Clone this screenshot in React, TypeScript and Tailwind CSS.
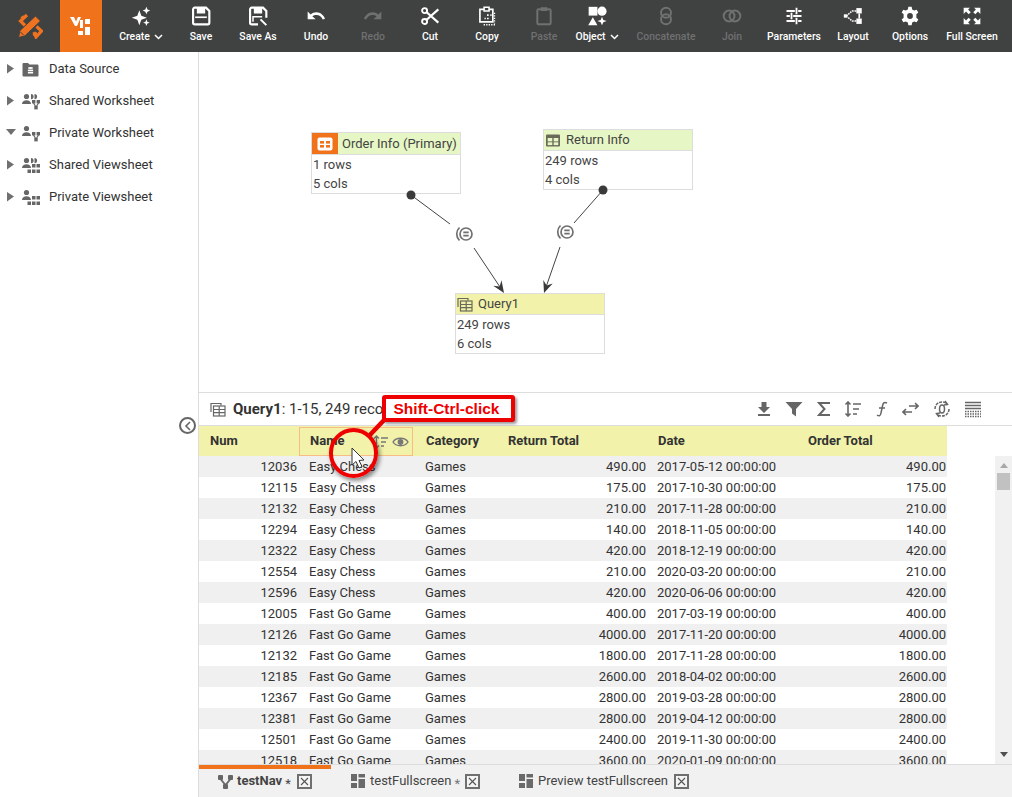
import React from "react";

const W = "#ffffff";

function Ico({ size = 24, children, className = "" }: { size?: number; children: React.ReactNode; className?: string }) {
  return (
    <svg width={size} height={size} viewBox="0 0 24 24" className={className} fill="none">
      {children}
    </svg>
  );
}

const icons: Record<string, React.ReactNode> = {
  create: (
    <g fill="currentColor">
      <path d="M10 5 L12.4 11.6 L19 14 L12.4 16.4 L10 23 L7.6 16.4 L1 14 L7.6 11.6 Z" />
      <path d="M18.5 1 L19.8 4.2 L23 5.5 L19.8 6.8 L18.5 10 L17.2 6.8 L14 5.5 L17.2 4.2 Z" />
      <path d="M18.5 16 L19.6 18.9 L22.5 20 L19.6 21.1 L18.5 24 L17.4 21.1 L14.5 20 L17.4 18.9 Z" />
    </g>
  ),
  save: (
    <g>
      <path d="M4.5 2 H18 L22 6 V20 a2 2 0 0 1-2 2 H4.5 a2 2 0 0 1-2-2 V4 a2 2 0 0 1 2-2 Z" stroke="currentColor" strokeWidth="2.6" />
      <rect x="7" y="2" width="10" height="7" fill="currentColor" />
      <rect x="5" y="12.5" width="14" height="2" fill="currentColor" />
    </g>
  ),
  saveas: (
    <g>
      <path d="M12 22 H4.5 a2 2 0 0 1-2-2 V4 a2 2 0 0 1 2-2 H18 L22 6 V14" stroke="currentColor" strokeWidth="2.6" />
      <rect x="7" y="2" width="10" height="7" fill="currentColor" />
      <path d="M6 19 V13 H17" stroke="currentColor" strokeWidth="1.8" />
      <path d="M15 16 L22 23" stroke="currentColor" strokeWidth="2.4" />
    </g>
  ),
  undo: <path fill="currentColor" d="M12.5 7.500 C9.900 7.500 7.500 8.500 5.600 10.100 L2 6.500 V16 H11.500 L7.600 12.400 C9 11.300 10.700 10.800 12.500 10.800 C16 10.800 19 12.900 20.100 16.300 L22.800 15.400 C21.400 11 17.200 7.500 12.500 7.500 Z" />,
  redo: <path fill="currentColor" d="M11.5 7.500 C14.100 7.500 16.500 8.500 18.400 10.100 L22 6.500 V16 H12.500 L16.400 12.400 C15 11.300 13.300 10.800 11.500 10.800 C8 10.800 5 12.900 3.900 16.300 L1.200 15.400 C2.600 11 6.800 7.500 11.500 7.500 Z" />,
  cut: (
    <g stroke="currentColor" strokeWidth="2.3">
      <circle cx="5.5" cy="5.5" r="3" />
      <circle cx="5.5" cy="18.5" r="3" />
      <path d="M8 7.5 L22 20 M8 16.5 L22 4" strokeWidth="2.6" />
    </g>
  ),
  copy: (
    <g>
      <path d="M9 4 H3.5 V19 H19 V4 H14" stroke="currentColor" strokeWidth="2" />
      <rect x="8.5" y="1.5" width="6" height="4.5" stroke="currentColor" strokeWidth="1.8" />
      <path d="M12 10 h2 v2 h-2 z M16 10 h1.5 v2 H16 z M12 14 h2 v2 h-2 z M9 14 h1.5 v2 H9 z" fill="currentColor" />
      <path d="M21 8 v13 M8 22.5 h14" stroke="currentColor" strokeWidth="1.6" strokeDasharray="1.6 1.4" />
    </g>
  ),
  paste: (
    <g>
      <rect x="4" y="4" width="16" height="18" rx="1.5" stroke="currentColor" strokeWidth="2.4" />
      <rect x="8" y="1.5" width="8" height="4.5" fill="currentColor" />
    </g>
  ),
  object: (
    <g fill="currentColor">
      <rect x="2" y="1" width="10.5" height="10.5" />
      <circle cx="18" cy="6.2" r="5.5" />
      <path d="M7 13.5 L12.5 23 H1.5 Z" />
      <path d="M18 13 L19.6 16.7 L23.5 18 L19.6 19.4 L18 23 L16.4 19.4 L12.5 18 L16.4 16.7 Z" />
    </g>
  ),
  concat: (
    <g stroke="currentColor" strokeWidth="2.4">
      <circle cx="12" cy="8" r="6" />
      <circle cx="12" cy="16" r="6" />
    </g>
  ),
  join: (
    <g stroke="currentColor" strokeWidth="2.4">
      <circle cx="8.5" cy="12" r="6.5" />
      <circle cx="15.5" cy="12" r="6.5" />
    </g>
  ),
  params: (
    <g stroke="currentColor" strokeWidth="2.2">
      <path d="M3 6 H13 M17 6 H21 M15 2 V10 M3 12 H7 M11 12 H21 M9 8 V16 M3 18 H13 M17 18 H21 M15 14 V22" />
    </g>
  ),
  layout: (
    <g>
      <path d="M4 12 L11 6 H19 M4 12 L11 18 H19" stroke="currentColor" strokeWidth="1.8" strokeDasharray="2 1" />
      <rect x="1" y="10" width="4" height="4" fill="currentColor" />
      <rect x="16" y="2.500" width="6.500" height="6.500" fill="currentColor" />
      <rect x="16" y="15" width="6.500" height="6.500" fill="currentColor" />
      <path d="M19.500 9 V15" stroke="currentColor" strokeWidth="2" />
    </g>
  ),
  options: (
    <path fill="currentColor" fillRule="evenodd" d="M10 1 H14 L14.6 4.2 C15.5 4.5 16.3 5 17 5.5 L20 4.4 L22 7.8 L19.6 9.9 C19.7 10.9 19.7 13.1 19.6 14.1 L22 16.2 L20 19.6 L17 18.5 C16.3 19 15.5 19.5 14.6 19.8 L14 23 H10 L9.4 19.8 C8.5 19.5 7.7 19 7 18.5 L4 19.6 L2 16.2 L4.4 14.1 C4.3 13.1 4.3 10.9 4.4 9.9 L2 7.8 L4 4.4 L7 5.5 C7.7 5 8.5 4.5 9.4 4.2 Z M12 8.5 A3.5 3.5 0 1 0 12 15.5 A3.5 3.5 0 1 0 12 8.5 Z" />
  ),
  full: (
    <g fill="currentColor">
      <path d="M2 2 H9.500 L7.300 4.200 L10.500 7.400 L8 9.900 L4.800 6.700 L2 9.500 Z" />
      <path d="M22 2 H14.500 L16.700 4.200 L13.500 7.400 L16 9.900 L19.200 6.700 L22 9.500 Z" />
      <path d="M2 22 H9.500 L7.300 19.800 L10.500 16.600 L8 14.100 L4.800 17.300 L2 14.500 Z" />
      <path d="M22 22 H14.500 L16.700 19.800 L13.500 16.600 L16 14.100 L19.200 17.300 L22 14.500 Z" />
    </g>
  ),
};

const tools: { k: string; label: string; w: string; off?: boolean; caret?: boolean }[] = [
  { k: "create", label: "Create", w: "w-[78px]", caret: true },
  { k: "save", label: "Save", w: "w-[42px]" },
  { k: "saveas", label: "Save As", w: "w-[72px]" },
  { k: "undo", label: "Undo", w: "w-[44px]" },
  { k: "redo", label: "Redo", w: "w-[70px]", off: true },
  { k: "cut", label: "Cut", w: "w-[44px]" },
  { k: "copy", label: "Copy", w: "w-[70px]" },
  { k: "paste", label: "Paste", w: "w-[44px]", off: true },
  { k: "object", label: "Object", w: "w-[62px]", caret: true },
  { k: "concat", label: "Concatenate", w: "w-[76px]", off: true },
  { k: "join", label: "Join", w: "w-[56px]", off: true },
  { k: "params", label: "Parameters", w: "w-[68px]" },
  { k: "layout", label: "Layout", w: "w-[50px]" },
  { k: "options", label: "Options", w: "w-[64px]" },
  { k: "full", label: "Full Screen", w: "w-[60px]" },
];

function Header() {
  return (
    <div className="flex h-[52px] shrink-0 bg-[#404242]">
      <div className="flex h-full w-[60px] items-center justify-center">
        <svg width="26" height="26" viewBox="0 0 26 26" fill="none">
          <path d="M10 2 L3.500 8 L9 13.500 M17 19 L19 24 L24.500 18 L19.500 13.500" stroke="#ee7220" strokeWidth="3.200" />
          <path d="M4 5 L7 3 M16 22 L20 20" stroke="#ee7220" strokeWidth="2" />
          <path d="M1.500 24.500 L3 17.500 L18.500 3 L23.500 8 L8 22.800 Z" fill="#ee7220" stroke="#404242" strokeWidth="1" />
          <path d="M3.500 19 L6.500 22" stroke="#404242" strokeWidth="1" />
        </svg>
      </div>
      <div className="flex h-full w-[42px] items-center justify-center bg-[#f0731c]">
        <svg width="22" height="20" viewBox="0 0 22 20" fill="#fff">
          <path d="M0 1 H4 L6 5.500 L8 1 H11 L7 10 H5 Z" />
          <rect x="10" y="4" width="3" height="8" />
          <rect x="15" y="3" width="5" height="5" />
          <rect x="15" y="11" width="5" height="8" />
          <rect x="8" y="15" width="5" height="4" />
        </svg>
      </div>
      {tools.map((t) => (
        <div key={t.k} className={`flex h-full shrink-0 flex-col items-center ${t.w} ${t.off ? "text-[#6f7070]" : "text-white"}`}>
          <div className="mt-[5px] flex h-[22px] items-center justify-center">
            <Ico size={20}>{icons[t.k]}</Ico>
          </div>
          <div className="mt-[3px] flex h-[14px] items-center whitespace-nowrap text-[10.4px] font-medium leading-[14px]">
            {t.label}
            {t.caret && (
              <svg width="9" height="6" viewBox="0 0 9 6" className="ml-[4px]">
                <path d="M1 1 L4.5 4.5 L8 1" stroke={W} strokeWidth="1.5" fill="none" />
              </svg>
            )}
          </div>
        </div>
      ))}
    </div>
  );
}

const G = "#666666";
function People({ shared }: { shared: boolean }) {
  return (
    <g fill={G}>
      <circle cx="4.5" cy="3.5" r="2.6" />
      <path d="M0 11 a4.500 3.800 0 0 1 9 0 Z" />
      {shared && <path d="M9 1 a2.6 2.6 0 0 1 0 5.200 Z M12.5 1 a2.6 2.6 0 0 1 0 5.200 Z" />}
    </g>
  );
}
function TreeIcon({ kind }: { kind: string }) {
  if (kind === "ds")
    return (
      <svg width="17" height="15" viewBox="0 0 17 15">
        <path d="M0.500 2 a1 1 0 0 1 1-1 H6 L7.500 2.500 H15.500 a1 1 0 0 1 1 1 V13.500 a1 1 0 0 1-1 1 H1.500 a1 1 0 0 1-1-1 Z" fill={G} />
        <ellipse cx="8.5" cy="6" rx="2.6" ry="1.1" fill="#fff" />
        <rect x="5.9" y="7.6" width="5.2" height="1.6" fill="#fff" />
        <rect x="5.9" y="9.9" width="5.2" height="1.6" fill="#fff" />
      </svg>
    );
  const ws = kind === "sw" || kind === "pw";
  const shared = kind === "sw" || kind === "sv";
  return (
    <svg width="18" height="17" viewBox="0 0 18 17">
      <People shared={shared} />
      {ws ? (
        <g fill={G}>
          <rect x="10" y="7" width="3.400" height="3.400" />
          <rect x="14.600" y="7" width="3.400" height="3.400" />
          <rect x="12.300" y="13" width="3.400" height="3.400" />
          <path d="M11.5 10 L14 14 L16.5 10" stroke={G} strokeWidth="1.200" fill="none" />
        </g>
      ) : (
        <g fill={G}>
          <rect x="10" y="7" width="3.500" height="3.500" />
          <rect x="14.500" y="7" width="3.500" height="3.500" />
          <rect x="5.500" y="12.500" width="3.500" height="3.500" />
          <rect x="10" y="12.500" width="3.500" height="3.500" />
          <rect x="14.500" y="12.500" width="3.500" height="3.500" />
        </g>
      )}
    </svg>
  );
}

const tree = [
  { k: "ds", label: "Data Source" },
  { k: "sw", label: "Shared Worksheet" },
  { k: "pw", label: "Private Worksheet", open: true },
  { k: "sv", label: "Shared Viewsheet" },
  { k: "pv", label: "Private Viewsheet" },
];

function Sidebar() {
  return (
    <div className="relative w-[199px] shrink-0 border-r border-[#dddddd] pt-[1px]">
      {tree.map((t) => (
        <div key={t.k} className="flex h-[32px] items-center text-[13px] text-[#333333]">
          <div className="flex w-[22px] justify-center">
            <svg width="14" height="12" viewBox="0 0 14 12">
              {t.open ? <path d="M2 2 H12 L7 8 Z" fill="#707070" /> : <path d="M3 1 L10 5.500 L3 10.500 Z" fill="#707070" />}
            </svg>
          </div>
          <div className="flex w-[27px] justify-start">
            <TreeIcon kind={t.k} />
          </div>
          <span>{t.label}</span>
        </div>
      ))}
      <div className="absolute left-[179px] top-[365px] flex h-[17px] w-[17px] items-center justify-center rounded-full border-2 border-[#666666] bg-white">
        <svg width="8" height="10" viewBox="0 0 8 10">
          <path d="M6 1 L2 5 L6 9" stroke="#666666" strokeWidth="1.6" fill="none" />
        </svg>
      </div>
    </div>
  );
}

function TableIcon({ color = "#6a6a5a", multi = false }: { color?: string; multi?: boolean }) {
  return (
    <svg width="16" height="15" viewBox="0 0 16 15" fill="none">
      {multi && <path d="M1 10 V1.5 H11 V3.5" stroke={color} strokeWidth="1.2" />}
      {multi ? (
        <g stroke={color} strokeWidth="1.2">
          <rect x="3.5" y="4" width="11.5" height="10" />
          <path d="M3.5 7.5 H15 M9.2 4 V14 M3.5 10.7 H15" />
        </g>
      ) : (
        <g>
          <rect x="1" y="1.5" width="14" height="12" rx="1" fill={color} />
          <rect x="2.7" y="5" width="4.6" height="3.4" fill="#e6f7c5" />
          <rect x="8.7" y="5" width="4.6" height="3.4" fill="#e6f7c5" />
          <rect x="2.7" y="9.3" width="4.6" height="2.8" fill="#e6f7c5" />
          <rect x="8.7" y="9.3" width="4.6" height="2.8" fill="#e6f7c5" />
        </g>
      )}
    </svg>
  );
}

function Node({ pos, title, rows, cols, bg, primary, multi }: { pos: string; title: string; rows: string; cols: string; bg: string; primary?: boolean; multi?: boolean }) {
  return (
    <div className={`absolute w-[150px] border border-[#dddddd] bg-white text-[13px] text-[#444444] ${pos}`}>
      <div className={`flex items-center ${bg} ${primary ? "h-[21px]" : "h-[20px]"}`}>
        {primary ? (
          <div className="flex h-full w-[26px] items-center justify-center bg-[#f0731c]">
            <svg width="16" height="14" viewBox="0 0 16 14">
              <rect x="0.5" y="0.5" width="15" height="13" rx="2" fill="#fff" />
              <rect x="3" y="4" width="4" height="2.6" fill="#f0731c" />
              <rect x="9" y="4" width="4" height="2.6" fill="#f0731c" />
              <rect x="3" y="8" width="4" height="2.6" fill="#f0731c" />
              <rect x="9" y="8" width="4" height="2.6" fill="#f0731c" />
            </svg>
          </div>
        ) : (
          <div className="ml-[1px] flex w-[17px] items-center">
            <TableIcon multi={multi} />
          </div>
        )}
        <span className="ml-[4px] whitespace-nowrap">{title}</span>
      </div>
      <div className="h-[20px] border-t border-[#dddddd] pl-[1px] leading-[20px]">{rows}</div>
      <div className="h-[19px] pl-[1px] leading-[19px]">{cols}</div>
    </div>
  );
}

function JoinMark({ x, y }: { x: number; y: number }) {
  return (
    <g transform={`translate(${x} ${y})`} stroke="#707070" fill="none" strokeWidth="1.7">
      <circle cx="2" cy="0" r="6" />
      <path d="M-4.500 -6.500 A9 9 0 0 0 -4.500 6.500" />
      <path d="M-0.700 -1.700 H4.700 M-0.700 1.700 H4.700" />
    </g>
  );
}

function Canvas() {
  return (
    <div className="relative h-[341px] shrink-0 border-b border-[#dddddd]">
      <Node pos="left-[112px] top-[80px]" title="Order Info (Primary)" rows="1 rows" cols="5 cols" bg="bg-[#e6f7c5]" primary />
      <Node pos="left-[344px] top-[77px]" title="Return Info" rows="249 rows" cols="4 cols" bg="bg-[#e6f7c5]" />
      <Node pos="left-[256px] top-[241px]" title="Query1" rows="249 rows" cols="6 cols" bg="bg-[#f2f2aa]" multi />
      <svg width="813" height="340" className="absolute left-0 top-0">
        <g stroke="#444444" strokeWidth="1" fill="none">
          <path d="M212 143 L251 172" />
          <path d="M404 138 L375 171" />
          <path d="M275 196 L303 238" />
          <path d="M361 195 L346 238" />
        </g>
        <circle cx="212" cy="143" r="4.5" fill="#3a3a3a" />
        <circle cx="404" cy="138" r="4.5" fill="#3a3a3a" />
        <path d="M305 241 L302.500 228.300 L300.600 234.400 L294.200 233.800 Z" fill="#3a3a3a" />
        <path d="M345 241 L353.700 231.400 L347.600 233.500 L344.300 228 Z" fill="#3a3a3a" />
        <JoinMark x={265} y={182} />
        <JoinMark x={366} y={180} />
      </svg>
    </div>
  );
}

function QueryBar() {
  const c = "#666666";
  return (
    <div className="flex h-[33px] shrink-0 items-center border-b border-[#dddddd] pl-[11px] text-[15px] text-[#333333]">
      <TableIcon multi color="#666666" />
      <span className="ml-[7px] font-bold">Query1</span>
      <span>: 1-15, 249 records</span>
      <div className="ml-auto mr-[30px] flex items-center gap-[13.3px]">
        <svg width="16" height="16" viewBox="0 0 16 16" fill={c}><path d="M5.500 1 H10.500 V6 H14 L8 12 L2 6 H5.500 Z" /><rect x="2" y="13" width="12" height="2" /></svg>
        <svg width="18" height="16" viewBox="0 0 18 16" fill={c}><path d="M0.5 1 H17.500 L11 8 V15.500 L7 12.500 V8 Z" /></svg>
        <svg width="14" height="16" viewBox="0 0 14 16" fill="none" stroke={c} strokeWidth="2"><path d="M13 2 H2 L7.500 8 L2 14 H13" /></svg>
        <svg width="18" height="16" viewBox="0 0 18 16" fill="none" stroke={c} strokeWidth="1.6"><path d="M4 1 V15 M1.500 3.500 L4 1 L6.500 3.500 M1.500 12.500 L4 15 L6.500 12.500 M9 3 H17 M9 8 H15 M9 13 H13" /></svg>
        <svg width="14" height="16" viewBox="0 0 14 16" fill="none" stroke={c} strokeWidth="1.5"><path d="M12 2 C9 0.500 8 2 7.500 5 L6 12 C5.500 15 4 15.500 2 14 M4 7 H10" /></svg>
        <svg width="17" height="16" viewBox="0 0 17 16" fill="none" stroke={c} strokeWidth="1.6"><path d="M7 5 H16 M13 2 L16 5 L13 8 M10 11 H1 M4 8 L1 11 L4 14" /></svg>
        <svg width="18" height="18" viewBox="0 0 18 18" fill="none" stroke={c} strokeWidth="1.5"><path d="M2 9 A7 7 0 0 1 14 4 M16 9 A7 7 0 0 1 4 14" strokeDasharray="3 1" /><ellipse cx="9" cy="9" rx="2.500" ry="4" /><path d="M12 1 L14.500 4.500 L11 5 M6 17 L3.500 13.500 L7 13" /></svg>
        <svg width="18" height="17" viewBox="0 0 18 17" fill="none" stroke={c}><path d="M1 1.500 H17 M1 4.500 H17 M1 7.500 H17" strokeWidth="1.3" /><path d="M1 10.500 H17 M1 13 H17 M1 15.500 H17" strokeDasharray="1.500 1" strokeWidth="1.3" /></svg>
      </div>
    </div>
  );
}

const data: [string, string, string, string, string, string][] = [
  ["12036", "Easy Chess", "Games", "490.00", "2017-05-12 00:00:00", "490.00"],
  ["12115", "Easy Chess", "Games", "175.00", "2017-10-30 00:00:00", "175.00"],
  ["12132", "Easy Chess", "Games", "210.00", "2017-11-28 00:00:00", "210.00"],
  ["12294", "Easy Chess", "Games", "140.00", "2018-11-05 00:00:00", "140.00"],
  ["12322", "Easy Chess", "Games", "420.00", "2018-12-19 00:00:00", "420.00"],
  ["12554", "Easy Chess", "Games", "210.00", "2020-03-20 00:00:00", "210.00"],
  ["12596", "Easy Chess", "Games", "420.00", "2020-06-06 00:00:00", "420.00"],
  ["12005", "Fast Go Game", "Games", "400.00", "2017-03-19 00:00:00", "400.00"],
  ["12126", "Fast Go Game", "Games", "4000.00", "2017-11-20 00:00:00", "4000.00"],
  ["12132", "Fast Go Game", "Games", "1800.00", "2017-11-28 00:00:00", "1800.00"],
  ["12185", "Fast Go Game", "Games", "2600.00", "2018-04-02 00:00:00", "2600.00"],
  ["12367", "Fast Go Game", "Games", "2800.00", "2019-03-28 00:00:00", "2800.00"],
  ["12381", "Fast Go Game", "Games", "2800.00", "2019-04-12 00:00:00", "2800.00"],
  ["12501", "Fast Go Game", "Games", "2400.00", "2019-11-30 00:00:00", "2400.00"],
  ["12518", "Fast Go Game", "Games", "3600.00", "2020-01-09 00:00:00", "3600.00"],
];

const COLS = "grid grid-cols-[100px_116px_85px_150px_150px_147px] w-[748px]";

function Table() {
  return (
    <div className="relative flex min-h-0 flex-1 flex-col overflow-hidden">
      <div className={`${COLS} h-[30px] shrink-0 bg-[#f2f2aa] text-[13px] font-bold leading-[30px] text-[#333333]`}>
        <div className="pl-[11px]">Num</div>
        <div className="mr-[2px] mt-[1px] flex border border-[#f7bd84] pl-[10px] leading-[26px]">
          Name
          <div className="ml-auto mr-[3px] flex items-center gap-[3px]">
            <svg width="16" height="14" viewBox="0 0 16 14" fill="none" stroke="#777777" strokeWidth="1.4"><path d="M3.500 1 V13 M1 3.500 L3.500 1 L6 3.500 M1 10.500 L3.500 13 L6 10.500 M8 3 H15 M8 7 H13 M8 11 H11" /></svg>
            <svg width="17" height="12" viewBox="0 0 17 12" fill="none" stroke="#777777" strokeWidth="1.4"><path d="M1 6 C4 1 13 1 16 6 C13 11 4 11 1 6 Z" /><circle cx="8.500" cy="6" r="2.200" fill="#777777" /></svg>
          </div>
        </div>
        <div className="pl-[11px]">Category</div>
        <div className="pl-[8px]">Return Total</div>
        <div className="pl-[8px]">Date</div>
        <div className="pl-[8px]">Order Total</div>
      </div>
      {data.map((r, i) => (
        <div key={i} className={`${COLS} h-[21px] shrink-0 text-[13px] leading-[21px] text-[#333333] ${i % 2 === 0 ? "bg-[#f0f0f0]" : "bg-white"}`}>
          <div className="pr-[2px] text-right">{r[0]}</div>
          <div className="pl-[10px]">{r[1]}</div>
          <div className="pl-[10px]">{r[2]}</div>
          <div className="pr-[4px] text-right">{r[3]}</div>
          <div className="pl-[7px]">{r[4]}</div>
          <div className="pr-[1px] text-right">{r[5]}</div>
        </div>
      ))}
      <div className="absolute bottom-0 right-0 top-[30px] flex w-[17px] flex-col items-center bg-[#f1f1f1]">
        <svg width="8" height="5" viewBox="0 0 8 5" className="mt-[7px]"><path d="M0 5 L4 0 L8 5 Z" fill="#a8a8a8" /></svg>
        <div className="mt-[5px] h-[17px] w-[13px] bg-[#c1c1c1]" />
        <svg width="8" height="5" viewBox="0 0 8 5" className="mb-[7px] mt-auto"><path d="M0 0 L8 0 L4 5 Z" fill="#505050" /></svg>
      </div>
    </div>
  );
}

function CloseBox() {
  return (
    <span className="flex h-[15px] w-[15px] items-center justify-center border-2 border-[#6f6f6f] bg-[#f4f4f4]">
      <svg width="9" height="9" viewBox="0 0 9 9"><path d="M1 1 L8 8 M8 1 L1 8" stroke="#555555" strokeWidth="1.1" /></svg>
    </span>
  );
}

function VsIcon() {
  return (
    <svg width="14" height="14" viewBox="0 0 14 14" fill="#6a6a6a">
      <rect x="0" y="0" width="6" height="7" />
      <rect x="7.500" y="0" width="6.500" height="3.500" />
      <rect x="7.500" y="5" width="6.500" height="9" />
      <rect x="0" y="9" width="6" height="5" />
    </svg>
  );
}

function Tabs() {
  return (
    <div className="relative flex h-[33px] shrink-0 items-center border-t border-[#dddddd] bg-[#f1f1f1] text-[13px] text-[#444444]">
      <div className="absolute left-0 top-0 h-[4px] w-[132px] bg-[#f0731c]" />
      <div className="ml-[19px] flex w-[133px] items-center">
        <svg width="15" height="15" viewBox="0 0 15 15" fill="#666666">
          <rect x="0" y="1" width="5" height="5" rx="1" />
          <rect x="10" y="1" width="5" height="5" rx="1" />
          <rect x="5" y="10" width="5" height="5" rx="1" />
          <path d="M2.500 5 L7.500 11 L12.500 5" stroke="#666666" strokeWidth="1.800" fill="none" />
        </svg>
        <span className="ml-[4px] font-bold">testNav</span>
        <span className="ml-[3px] mr-[6px] mt-[5px] text-[13px] leading-none">*</span>
        <CloseBox />
      </div>
      <div className="flex w-[168px] items-center">
        <VsIcon />
        <span className="ml-[5px]">testFullscreen</span>
        <span className="ml-[3px] mr-[5px] mt-[5px] text-[13px] leading-none text-[#777777]">*</span>
        <CloseBox />
      </div>
      <div className="flex items-center">
        <VsIcon />
        <span className="ml-[5px]">Preview testFullscreen</span>
        <span className="ml-[6px]"><CloseBox /></span>
      </div>
    </div>
  );
}

function Annotation() {
  return (
    <div className="pointer-events-none absolute left-0 top-0">
      <svg width="60" height="40" viewBox="0 0 60 40" className="absolute left-[350px] top-[410px]">
        <path d="M36 8 L18 27" stroke="#ee0000" strokeWidth="4.500" />
      </svg>
      <div className="absolute left-[329px] top-[428px] h-[50px] w-[49px] rounded-full border-[4px] border-[#ee0000] shadow-[2px_3px_4px_rgba(0,0,0,0.45)]" />
      <div className="absolute left-[382px] top-[395px] flex h-[27px] w-[133px] items-center justify-center rounded-[3px] border-[4px] border-[#ee0000] bg-white pr-[4px] font-['Liberation_Sans',sans-serif] text-[15.5px] font-bold text-[#ee0000] shadow-[2px_2px_3px_rgba(0,0,0,0.4)]">
        Shift-Ctrl-click
      </div>
      <svg width="16" height="24" viewBox="0 0 16 24" className="absolute left-[351px] top-[447px]">
        <path d="M1 1 V18 L5 14.500 L8 21 L11 19.500 L8 13.500 L13 13 Z" fill="#ffffff" stroke="#333333" strokeWidth="1" />
      </svg>
    </div>
  );
}

export default function App() {
  return (
    <div className="relative flex h-[797px] w-[1012px] flex-col overflow-hidden bg-white font-['Roboto',sans-serif]">
      <Header />
      <div className="flex min-h-0 flex-1">
        <Sidebar />
        <div className="flex min-w-0 flex-1 flex-col">
          <Canvas />
          <QueryBar />
          <Table />
          <Tabs />
        </div>
      </div>
      <Annotation />
    </div>
  );
}
